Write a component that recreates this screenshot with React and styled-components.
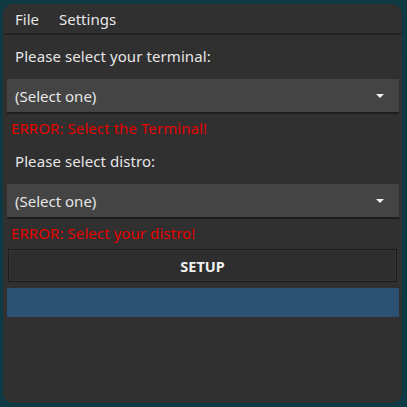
import React from 'react';
import styled, { createGlobalStyle } from 'styled-components';

const GlobalStyle = createGlobalStyle`
  html, body {
    margin: 0;
    padding: 0;
    background: #0f3a44;
  }
  body {
    font-family: "Noto Sans", "Open Sans", sans-serif;
  }
`;

const Desktop = styled.div`
  width: 407px;
  height: 407px;
  padding: 4px 5px 4px 3px;
  box-sizing: border-box;
  background: linear-gradient(180deg, #0f3943 0%, #0d3a45 100%);
`;

const Window = styled.div`
  height: 100%;
  background: #303030;
  border-radius: 10px;
  overflow: hidden;
  display: flex;
  flex-direction: column;
  color: #e6e6e6;
`;

const MenuBar = styled.div`
  height: 29px;
  display: flex;
  align-items: center;
  padding-left: 4px;
  border-bottom: 2px solid #232323;
  font-size: 15px;
`;

const MenuItem = styled.span`
  padding: 0 8px;
  margin-right: ${p => p.$gap || 0}px;
`;

const Content = styled.div`
  padding: 0 3px 0 4px;
  display: flex;
  flex-direction: column;
`;

const Label = styled.div`
  font-size: 15px;
  line-height: 20px;
  letter-spacing: 0.08px;
  padding: 0 8px;
  margin-top: ${p => p.$top}px;
  margin-bottom: 13px;
`;

const Select = styled.div`
  height: 33px;
  background: #444444;
  border-bottom: 2px solid #1e1e1e;
  display: flex;
  align-items: center;
  justify-content: space-between;
  padding: 0 15px 0 8px;
  font-size: 15px;
  line-height: 20px;
`;

const Caret = styled.span`
  width: 0;
  height: 0;
  border-left: 4px solid transparent;
  border-right: 4px solid transparent;
  border-top: 4px solid #f2f2f2;
`;

const Error = styled.div`
  color: #e60000;
  font-size: 15px;
  line-height: 20px;
  letter-spacing: 0.08px;
  padding: 0 4px;
  margin-top: 4px;
`;

const Button = styled.div`
  margin: 6px 2px 0 1px;
  height: 31px;
  border: 1px solid #1c1c1c;
  box-shadow: inset 0 0 0 1px #353535;
  background: #2e2e2e;
  display: flex;
  align-items: center;
  justify-content: center;
  font-size: 14.5px;
  font-weight: 700;
  color: #f0f0f0;
`;

const Progress = styled.div`
  margin-top: 6px;
  height: 29px;
  background: #2c5273;
`;

const Dropdown = ({ value }) => (
  <Select>
    <span>{value}</span>
    <Caret />
  </Select>
);

export default function App() {
  return (
    <>
      <GlobalStyle />
      <Desktop>
        <Window>
          <MenuBar>
            <MenuItem $gap={4}>File</MenuItem>
            <MenuItem>Settings</MenuItem>
          </MenuBar>
          <Content>
            <Label $top={11}>Please select your terminal:</Label>
            <Dropdown value="(Select one)" />
            <Error>ERROR: Select the Terminal!</Error>
            <Label $top={13}>Please select distro:</Label>
            <Dropdown value="(Select one)" />
            <Error>ERROR: Select your distro!</Error>
            <Button>SETUP</Button>
            <Progress />
          </Content>
        </Window>
      </Desktop>
    </>
  );
}
